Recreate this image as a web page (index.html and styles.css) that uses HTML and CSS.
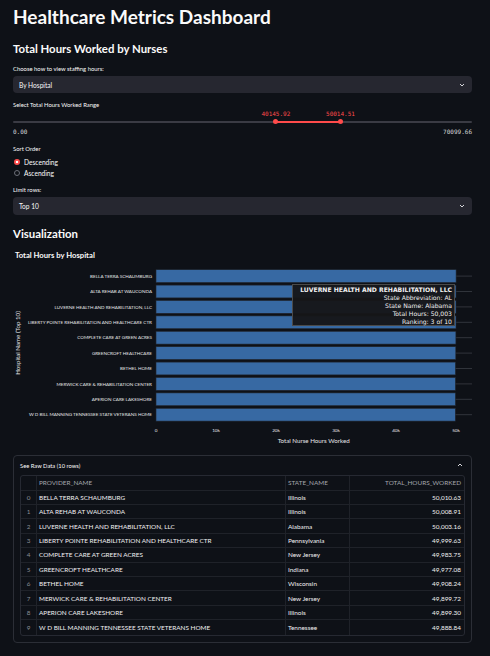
FILE: index.html
```html
<!DOCTYPE html>
<html lang="en">
<head>
<meta charset="utf-8">
<title>Healthcare Metrics Dashboard</title>
<link rel="stylesheet" href="styles.css">
</head>
<body>
<main class="main">
  <h1 class="title">Healthcare Metrics Dashboard</h1>
  <h3 class="subheader">Total Hours Worked by Nurses</h3>

  <div class="label label-first">Choose how to view staffing hours:</div>
  <div class="select">
    <span>By Hospital</span>
    <svg class="chev" width="6" height="4" viewBox="0 0 6 4"><path d="M1 1 L3 3 L5 1" fill="none" stroke="#d5d6da" stroke-width="1"/></svg>
  </div>

  <div class="label label-slider">Select Total Hours Worked Range</div>
  <div class="slider">
    <div class="slider-values">
      <span class="thumb-val" style="left:57.27%">40145.92</span>
      <span class="thumb-val" style="left:71.35%">50014.51</span>
    </div>
    <div class="track">
      <div class="track-fill" style="left:57.27%; width:14.08%"></div>
      <span class="thumb" style="left:57.27%"></span>
      <span class="thumb" style="left:71.35%"></span>
    </div>
    <div class="slider-range"><span>0.00</span><span>70099.66</span></div>
  </div>

  <div class="label label-sort">Sort Order</div>
  <div class="radios">
    <div class="radio"><span class="dot dot-on"></span><span>Descending</span></div>
    <div class="radio"><span class="dot"></span><span>Ascending</span></div>
  </div>

  <div class="label label-limit">Limit rows:</div>
  <div class="select select-2">
    <span>Top 10</span>
    <svg class="chev" width="6" height="4" viewBox="0 0 6 4"><path d="M1 1 L3 3 L5 1" fill="none" stroke="#d5d6da" stroke-width="1"/></svg>
  </div>

  <h3 class="subheader viz">Visualization</h3>

  <div class="chart">
    <svg width="459" height="205" viewBox="0 0 459 205" class="chart-svg">
      <text x="2" y="13" class="c-title">Total Hours by Hospital</text>
      <g class="grid">
        <line x1="143" x2="459" y1="31.1" y2="31.1"/>
        <line x1="143" x2="459" y1="46.5" y2="46.5"/>
        <line x1="143" x2="459" y1="61.9" y2="61.9"/>
        <line x1="143" x2="459" y1="77.3" y2="77.3"/>
        <line x1="143" x2="459" y1="92.7" y2="92.7"/>
        <line x1="143" x2="459" y1="108.1" y2="108.1"/>
        <line x1="143" x2="459" y1="123.5" y2="123.5"/>
        <line x1="143" x2="459" y1="138.9" y2="138.9"/>
        <line x1="143" x2="459" y1="154.3" y2="154.3"/>
        <line x1="143" x2="459" y1="169.7" y2="169.7"/>
      </g>
      <g class="bars">
        <rect x="143" y="24.7" width="300.1" height="12.8"/>
        <rect x="143" y="40.1" width="300.0" height="12.8"/>
        <rect x="143" y="55.5" width="300.0" height="12.8"/>
        <rect x="143" y="70.9" width="300.0" height="12.8"/>
        <rect x="143" y="86.3" width="299.9" height="12.8"/>
        <rect x="143" y="101.7" width="299.8" height="12.8"/>
        <rect x="143" y="117.1" width="299.4" height="12.8"/>
        <rect x="143" y="132.5" width="299.4" height="12.8"/>
        <rect x="143" y="147.9" width="299.4" height="12.8"/>
        <rect x="143" y="163.3" width="299.3" height="12.8"/>
      </g>
      <g class="ylabels">
        <text x="139" y="32.8">BELLA TERRA SCHAUMBURG</text>
        <text x="139" y="48.2">ALTA REHAB AT WAUCONDA</text>
        <text x="139" y="63.6">LUVERNE HEALTH AND REHABILITATION, LLC</text>
        <text x="139" y="79.0">LIBERTY POINTE REHABILITATION AND HEALTHCARE CTR</text>
        <text x="139" y="94.4">COMPLETE CARE AT GREEN ACRES</text>
        <text x="139" y="109.8">GREENCROFT HEALTHCARE</text>
        <text x="139" y="125.2">BETHEL HOME</text>
        <text x="139" y="140.6">MERWICK CARE &amp; REHABILITATION CENTER</text>
        <text x="139" y="156.0">APERION CARE LAKESHORE</text>
        <text x="139" y="171.4">W D BILL MANNING TENNESSEE STATE VETERANS HOME</text>
      </g>
      <g class="xticks">
        <text x="143" y="186.6">0</text>
        <text x="203" y="186.6">10k</text>
        <text x="263" y="186.6">20k</text>
        <text x="323" y="186.6">30k</text>
        <text x="383" y="186.6">40k</text>
        <text x="443" y="186.6">50k</text>
      </g>
      <text x="300.7" y="198.3" class="x-title">Total Nurse Hours Worked</text>
      <text transform="translate(7.3 98) rotate(-90)" class="y-title">Hospital Name (Top 10)</text>
    </svg>
    <div class="tooltip">
      <div class="tt-head">LUVERNE HEALTH AND REHABILITATION, LLC</div>
      <div>State Abbreviation: AL</div>
      <div>State Name: Alabama</div>
      <div>Total Hours: 50,003</div>
      <div>Ranking: 3 of 10</div>
    </div>
  </div>

  <section class="expander">
    <div class="exp-head">
      <span>See Raw Data (10 rows)</span>
      <svg width="6" height="4" viewBox="0 0 6 4"><path d="M1 3 L3 1 L5 3" fill="none" stroke="#d5d6da" stroke-width="1"/></svg>
    </div>
    <table class="table">
      <thead>
        <tr><th class="idx"></th><th class="l">PROVIDER_NAME</th><th class="l">STATE_NAME</th><th class="r">TOTAL_HOURS_WORKED</th></tr>
      </thead>
      <tbody>
        <tr><td class="idx">0</td><td>BELLA TERRA SCHAUMBURG</td><td>Illinois</td><td class="r">50,010.63</td></tr>
        <tr><td class="idx">1</td><td>ALTA REHAB AT WAUCONDA</td><td>Illinois</td><td class="r">50,008.91</td></tr>
        <tr><td class="idx">2</td><td>LUVERNE HEALTH AND REHABILITATION, LLC</td><td>Alabama</td><td class="r">50,003.16</td></tr>
        <tr><td class="idx">3</td><td>LIBERTY POINTE REHABILITATION AND HEALTHCARE CTR</td><td>Pennsylvania</td><td class="r">49,999.63</td></tr>
        <tr><td class="idx">4</td><td>COMPLETE CARE AT GREEN ACRES</td><td>New Jersey</td><td class="r">49,983.75</td></tr>
        <tr><td class="idx">5</td><td>GREENCROFT HEALTHCARE</td><td>Indiana</td><td class="r">49,977.08</td></tr>
        <tr><td class="idx">6</td><td>BETHEL HOME</td><td>Wisconsin</td><td class="r">49,908.24</td></tr>
        <tr><td class="idx">7</td><td>MERWICK CARE &amp; REHABILITATION CENTER</td><td>New Jersey</td><td class="r">49,899.72</td></tr>
        <tr><td class="idx">8</td><td>APERION CARE LAKESHORE</td><td>Illinois</td><td class="r">49,899.30</td></tr>
        <tr><td class="idx">9</td><td>W D BILL MANNING TENNESSEE STATE VETERANS HOME</td><td>Tennessee</td><td class="r">49,888.84</td></tr>
      </tbody>
    </table>
  </section>

  <section class="next-box"></section>
</main>
</body>
</html>
```

FILE: styles.css
```css
html, body {
  margin: 0;
  background: #0e1117;
  height: 100%;
  overflow: hidden;
}
body {
  font-family: Lato, "Noto Sans", sans-serif;
  color: #fafafa;
}
.main {
  padding: 4px 18px 0 13px;
}
.title {
  font-size: 19px;
  line-height: 26px;
  font-weight: 700;
  margin: 0;
}
.subheader {
  font-size: 11.4px;
  line-height: 18px;
  font-weight: 700;
  margin: 10px 0 0;
}
.label {
  font-size: 5.9px;
  line-height: 10px;
  color: #fafafa;
}
.label-first { margin-top: 6px; }
.label-slider { margin-top: 7px; }
.label-sort { margin-top: 8px; }
.label-limit { margin-top: 6.8px; }

.select {
  margin-top: 2px;
  height: 17px;
  background: #262730;
  border-radius: 4px;
  display: flex;
  align-items: center;
  justify-content: space-between;
  padding: 0 7px 0 6px;
  font-size: 6.6px;
}
.select-2 { margin-top: 2.3px; height: 17.7px; }

.slider { position: relative; }
.slider-values {
  position: relative;
  height: 8px;
}
.thumb-val {
  position: absolute;
  top: 0;
  transform: translateX(-50%);
  font-family: "DejaVu Sans Mono", "Liberation Mono", monospace;
  font-size: 6px;
  line-height: 8px;
  color: #ff4b4b;
}
.track {
  position: relative;
  margin-top: 2.7px;
  height: 2px;
  background: #3a3b44;
  border-radius: 1px;
}
.track-fill {
  position: absolute;
  top: 0;
  height: 2px;
  background: #ff4b4b;
}
.thumb {
  position: absolute;
  top: -1.5px;
  width: 5px;
  height: 5px;
  margin-left: -2.5px;
  border-radius: 50%;
  background: #ff4b4b;
}
.slider-range {
  display: flex;
  justify-content: space-between;
  margin-top: 5px;
  font-family: "DejaVu Sans Mono", "Liberation Mono", monospace;
  font-size: 6px;
  line-height: 8px;
  color: #d8d9dc;
}

.radios { margin-top: 2.5px; }
.radio {
  display: flex;
  align-items: center;
  height: 11px;
  font-size: 6.6px;
  gap: 4px;
}
.dot {
  width: 6px;
  height: 6px;
  margin-left: 1px;
  border-radius: 50%;
  border: 1px solid #6c6f78;
  box-sizing: border-box;
}
.dot-on {
  border: none;
  background: radial-gradient(circle, #ffffff 0 1.3px, #ff4b4b 1.6px);
}

.viz { margin-top: 10.5px; }

.chart {
  position: relative;
  margin-top: 1.5px;
  height: 205px;
}
.chart-svg { display: block; }
.c-title {
  font-family: Lato, sans-serif;
  font-size: 7.7px;
  font-weight: 700;
  fill: #fafafa;
}
.grid line { stroke: #3a3d45; stroke-width: 0.8; }
.bars rect { fill: #3769a3; stroke: #22262d; stroke-width: 0.6; }
.ylabels text {
  font-family: Lato, sans-serif;
  font-size: 4.6px;
  fill: #e6e6e8;
  text-anchor: end;
}
.xticks text {
  font-family: Lato, sans-serif;
  font-size: 4.6px;
  fill: #e6e6e8;
  text-anchor: middle;
}
.x-title, .y-title {
  font-family: Lato, sans-serif;
  font-size: 6.2px;
  fill: #e6e6e8;
  text-anchor: middle;
}
.tooltip {
  position: absolute;
  left: 279px;
  top: 39px;
  width: 163px;
  height: 42px;
  box-sizing: border-box;
  background: rgba(22, 22, 24, 0.96);
  border: 1px solid #4a4a4a;
  padding: 1px 2px 0 1px;
  text-align: right;
  font-family: "DejaVu Sans", Verdana, sans-serif;
  font-size: 6.1px;
  line-height: 8.1px;
  color: #f2f2f2;
  white-space: nowrap;
}
.tt-head { font-weight: 700; }

.expander {
  margin-top: 4.7px;
  border: 1px solid #2b2e36;
  border-radius: 4px;
  padding: 0 6px 6.5px 6px;
}
.exp-head {
  display: flex;
  justify-content: space-between;
  align-items: center;
  height: 19px;
  font-size: 5.8px;
  padding-right: 2px;
}
.table {
  width: 445px;
  border-collapse: separate;
  border-spacing: 0;
  border: 1px solid #262932;
  border-radius: 3px;
  font-size: 6.4px;
  table-layout: fixed;
}
.table th, .table td {
  height: 14.4px;
  padding: 0 2px;
  border-bottom: 1px solid #1f2229;
  border-left: 1px solid #1f2229;
  box-sizing: border-box;
  white-space: nowrap;
  overflow: hidden;
}
.table tr:last-child td { border-bottom: none; }
.table th:first-child, .table td:first-child { border-left: none; }
.table th {
  height: 15px;
  font-weight: 400;
  color: #a3a6ad;
}
.table .l { text-align: left; }
.table .r { text-align: right; padding-right: 3px; }
.table th.idx, .table td.idx {
  width: 15px;
  text-align: center;
  color: #8b8e96;
}
.table th:nth-child(2) { width: 249px; }
.table th:nth-child(3) { width: 64px; }
.table td { color: #f0f0f2; }

.next-box {
  margin-top: 14px;
  height: 30px;
  border: 1px solid #2b2e36;
  border-radius: 4px;
}
```
